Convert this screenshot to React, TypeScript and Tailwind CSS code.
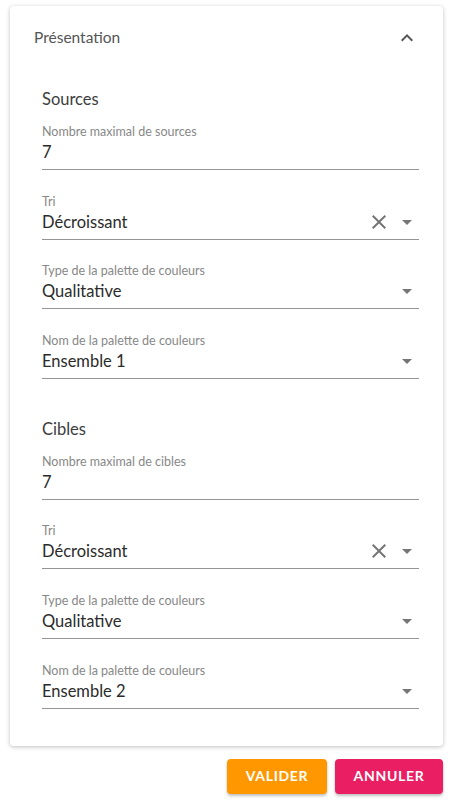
import React from "react";

const font = { fontFamily: "Lato, 'Noto Sans', sans-serif" };

function ArrowDrop() {
  return (
    <svg viewBox="0 0 24 24" className="h-6 w-6 fill-[#757575]">
      <path d="M7 10l5 5 5-5z" />
    </svg>
  );
}

function Close() {
  return (
    <svg viewBox="0 0 24 24" className="h-6 w-6 fill-[#757575]">
      <path d="M19 6.41 17.59 5 12 10.59 6.41 5 5 6.41 10.59 12 5 17.59 6.41 19 12 13.41 17.59 19 19 17.59 13.41 12z" />
    </svg>
  );
}

type FieldProps = { label: string; value: string; select?: boolean; clearable?: boolean; first?: boolean };

function Field({ label, value, select, clearable, first }: FieldProps) {
  return (
    <div className={first ? "mt-[13px]" : "mt-[23.6px]"}>
      <div className="h-4 text-[12.5px] leading-4 text-[#888]">{label}</div>
      <div className="flex h-[30px] items-start border-b border-[#949494]">
        <span className="flex-1 text-[16.5px] leading-6 text-[#2b2b2b]">{value}</span>
        {clearable && <Close />}
        {select && (
          <span className="ml-1">
            <ArrowDrop />
          </span>
        )}
      </div>
    </div>
  );
}

function Section({ title, max, palette, first }: { title: string; max: string; palette: string; first?: boolean }) {
  return (
    <div className={first ? "" : "mt-[38px]"}>
      <h3 className="h-6 text-[16.5px] leading-6 text-[#3d3d3d]">{title}</h3>
      <Field label={max} value="7" first />
      <Field label="Tri" value="Décroissant" select clearable />
      <Field label="Type de la palette de couleurs" value="Qualitative" select />
      <Field label="Nom de la palette de couleurs" value={palette} select />
    </div>
  );
}

export default function App() {
  return (
    <div className="min-h-[800px] bg-white pl-2.5 pr-2 pt-1.5" style={font}>
      <div className="rounded bg-white shadow-[0_1px_4px_rgba(0,0,0,0.25)]">
        <div className="flex h-16 items-center justify-between pl-6 pr-6">
          <span className="text-[15.5px] text-[#555]">Présentation</span>
          <svg viewBox="0 0 24 24" className="h-6 w-6 fill-[#555]">
            <path d="M12 8l-6 6 1.41 1.41L12 10.83l4.59 4.58L18 14z" />
          </svg>
        </div>
        <div className="pb-[37px] pl-8 pr-6 pt-[17px]">
          <Section title="Sources" max="Nombre maximal de sources" palette="Ensemble 1" first />
          <Section title="Cibles" max="Nombre maximal de cibles" palette="Ensemble 2" />
        </div>
      </div>
      <div className="mt-[13px] flex justify-end gap-2">
        <button className="h-[35px] w-[100px] rounded bg-[#ff9800] text-sm font-bold uppercase tracking-wider text-white shadow-[0_2px_3px_rgba(0,0,0,0.25)]">
          Valider
        </button>
        <button className="h-[35px] w-[108px] rounded bg-[#e91e63] text-sm font-bold uppercase tracking-wider text-white shadow-[0_2px_3px_rgba(0,0,0,0.25)]">
          Annuler
        </button>
      </div>
    </div>
  );
}
